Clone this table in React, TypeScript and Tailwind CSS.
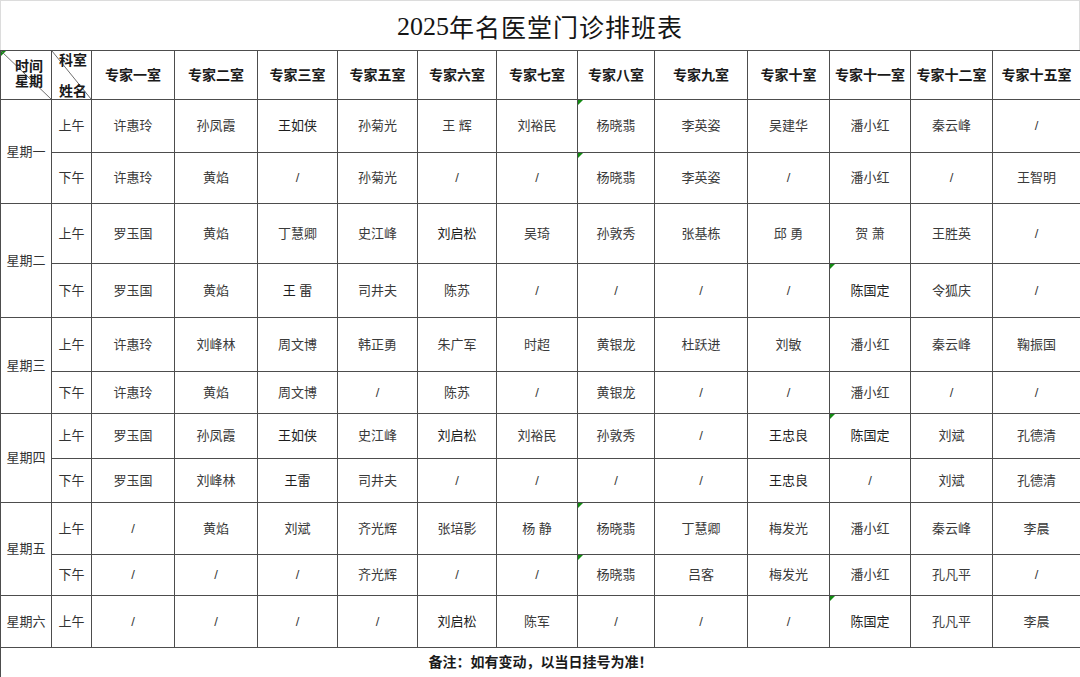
const rooms = [
  "专家一室", "专家二室", "专家三室", "专家五室", "专家六室", "专家七室",
  "专家八室", "专家九室", "专家十室", "专家十一室", "专家十二室", "专家十五室",
];

const colWidths = [51, 40, 83, 83, 80, 80, 79, 81, 77, 93, 82, 81, 82, 88];

type Day = {
  name: string;
  rows: { half: string; h: string; cells: string[]; marks?: number[] }[];
};

// marks = column indexes (0 = 专家一室) that carry the green corner flag
const days: Day[] = [
  {
    name: "星期一",
    rows: [
      { half: "上午", h: "h-[53px]", cells: ["许惠玲", "孙凤霞", "王如侠", "孙菊光", "王 辉", "刘裕民", "杨晓翡", "李英姿", "吴建华", "潘小红", "秦云峰", "/"], marks: [6] },
      { half: "下午", h: "h-[51px]", cells: ["许惠玲", "黄焰", "/", "孙菊光", "/", "/", "杨晓翡", "李英姿", "/", "潘小红", "/", "王智明"], marks: [6] },
    ],
  },
  {
    name: "星期二",
    rows: [
      { half: "上午", h: "h-[60px]", cells: ["罗玉国", "黄焰", "丁慧卿", "史江峰", "刘启松", "吴琦", "孙敦秀", "张基栋", "邱 勇", "贺 萧", "王胜英", "/"] },
      { half: "下午", h: "h-[54px]", cells: ["罗玉国", "黄焰", "王 雷", "司井夫", "陈苏", "/", "/", "/", "/", "陈国定", "令狐庆", "/"], marks: [9] },
    ],
  },
  {
    name: "星期三",
    rows: [
      { half: "上午", h: "h-[54px]", cells: ["许惠玲", "刘峰林", "周文博", "韩正勇", "朱广军", "时超", "黄银龙", "杜跃进", "刘敏", "潘小红", "秦云峰", "鞠振国"] },
      { half: "下午", h: "h-[42px]", cells: ["许惠玲", "黄焰", "周文博", "/", "陈苏", "/", "黄银龙", "/", "/", "潘小红", "/", "/"] },
    ],
  },
  {
    name: "星期四",
    rows: [
      { half: "上午", h: "h-[45px]", cells: ["罗玉国", "孙凤霞", "王如侠", "史江峰", "刘启松", "刘裕民", "孙敦秀", "/", "王忠良", "陈国定", "刘斌", "孔德清"], marks: [9] },
      { half: "下午", h: "h-[44px]", cells: ["罗玉国", "刘峰林", "王雷", "司井夫", "/", "/", "/", "/", "王忠良", "/", "刘斌", "孔德清"] },
    ],
  },
  {
    name: "星期五",
    rows: [
      { half: "上午", h: "h-[52px]", cells: ["/", "黄焰", "刘斌", "齐光辉", "张培影", "杨 静", "杨晓翡", "丁慧卿", "梅发光", "潘小红", "秦云峰", "李晨"], marks: [6] },
      { half: "下午", h: "h-[41px]", cells: ["/", "/", "/", "齐光辉", "/", "/", "杨晓翡", "吕客", "梅发光", "潘小红", "孔凡平", "/"], marks: [6] },
    ],
  },
  {
    name: "星期六",
    rows: [
      { half: "上午", h: "h-[52px]", cells: ["/", "/", "/", "/", "刘启松", "陈军", "/", "/", "/", "陈国定", "孔凡平", "李晨"], marks: [9] },
    ],
  },
];

const darkNames = ["王忠良", "陈国定", "王如侠", "刘启松", "王雷", "王 雷"];

function Flag() {
  return (
    <span className="absolute left-0 top-0 h-0 w-0 border-t-[5px] border-r-[5px] border-t-[#138a13] border-r-transparent" />
  );
}

export default function App() {
  const cellBase = "border border-[#4d4d4d] text-center align-middle p-0";

  return (
    <div className="w-[1080px] h-[677px] bg-white overflow-hidden font-['Liberation_Sans','Noto_Sans_CJK_SC',sans-serif]">
      <div className="h-[50px] flex items-center justify-center border-t border-x border-[#dcdcdc] text-[#151515] pt-[2px]">
        <span className="text-[26px] font-['Liberation_Serif','Noto_Sans_CJK_SC',serif]">2025</span>
        <span className="text-[25px] font-['Noto_Sans_CJK_SC',serif] tracking-[1px]">年名医堂门诊排班表</span>
      </div>

      <table className="table-fixed border-collapse w-[1080px] text-[13px] text-[#3a3a3a]">
        <colgroup>
          {colWidths.map((w, i) => (
            <col key={i} style={{ width: w }} />
          ))}
        </colgroup>
        <tbody>
          <tr className="h-[49px]">
            <td className={`${cellBase} relative font-bold text-[14px] leading-[15px] text-[#1a1a1a]`}>
              <Flag />
              <svg className="absolute inset-0 h-full w-full" viewBox="0 0 51 49" preserveAspectRatio="none">
                <line x1="0" y1="0" x2="51" y2="49" stroke="#6a6a6a" strokeWidth="1" />
              </svg>
              <div className="relative flex flex-col items-center pl-[6px] pb-[2px]">
                <span>时间</span>
                <span>星期</span>
              </div>
            </td>
            <td className={`${cellBase} relative font-bold text-[14px] text-[#1a1a1a]`}>
              <svg className="absolute inset-0 h-full w-full" viewBox="0 0 40 49" preserveAspectRatio="none">
                <line x1="0" y1="0" x2="40" y2="49" stroke="#6a6a6a" strokeWidth="1" />
              </svg>
              <div className="relative flex h-[48px] flex-col items-end justify-between pr-[4px] leading-[15px]">
                <span className="pt-[2px]">科室</span>
                <span>姓名</span>
              </div>
            </td>
            {rooms.map((r) => (
              <td key={r} className={`${cellBase} font-bold text-[14px] text-[#1a1a1a] whitespace-nowrap`}>
                {r}
              </td>
            ))}
          </tr>

          {days.map((day) =>
            day.rows.map((row, ri) => (
              <tr key={day.name + row.half} className={row.h}>
                {ri === 0 && (
                  <td rowSpan={day.rows.length} className={`${cellBase} text-[#333]`}>
                    {day.name}
                  </td>
                )}
                <td className={`${cellBase} text-[#333]`}>{row.half}</td>
                {row.cells.map((c, ci) => (
                  <td
                    key={ci}
                    className={`${cellBase} relative whitespace-pre ${darkNames.includes(c) ? "text-[#1e1e1e]" : ""}`}
                  >
                    {row.marks?.includes(ci) && <Flag />}
                    {c}
                  </td>
                ))}
              </tr>
            ))
          )}

          <tr className="h-[30px]">
            <td colSpan={14} className={`${cellBase} border-b-[#222] font-bold text-[14px] text-[#1a1a1a]`}>
              备注：如有变动，以当日挂号为准！
            </td>
          </tr>
        </tbody>
      </table>
    </div>
  );
}
